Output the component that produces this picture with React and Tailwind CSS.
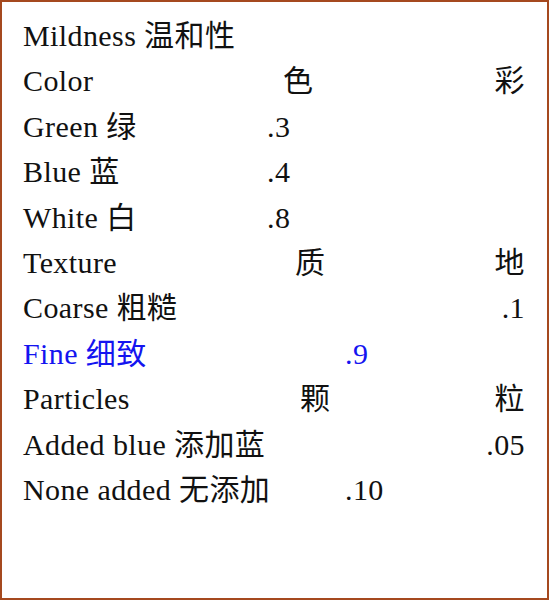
import React from "react";

const font = { fontFamily: '"Liberation Serif", "Noto Sans CJK SC", serif' };

function Row({ label, mid, midW, right, blue }) {
  return (
    <div className={"flex items-baseline whitespace-nowrap " + (blue ? "text-[#1414f0]" : "text-[#111]")}>
      <span className={mid !== undefined ? "shrink-0" : ""} style={mid !== undefined ? { width: midW } : undefined}>
        {label}
      </span>
      {mid !== undefined && <span>{mid}</span>}
      {right !== undefined && <span className="ml-auto">{right}</span>}
    </div>
  );
}

export default function App() {
  return (
    <div className="w-[549px] h-[600px] bg-white border-2 border-[#a5491f] pl-[21px] pr-[22px] pt-[11px] text-[30px] leading-[45.4px] tracking-[0.4px]" style={font}>
      <Row label="Mildness 温和性" />
      <Row label="Color" mid="色" midW={260} right="彩" />
      <Row label="Green 绿" mid=".3" midW={244} />
      <Row label="Blue 蓝" mid=".4" midW={244} />
      <Row label="White 白" mid=".8" midW={244} />
      <Row label="Texture" mid="质" midW={272} right="地" />
      <Row label="Coarse 粗糙" right=".1" />
      <Row label="Fine 细致" mid=".9" midW={322} blue />
      <Row label="Particles" mid="颗" midW={277} right="粒" />
      <Row label="Added blue 添加蓝" right=".05" />
      <Row label="None added 无添加" mid=".10" midW={322} />
    </div>
  );
}
